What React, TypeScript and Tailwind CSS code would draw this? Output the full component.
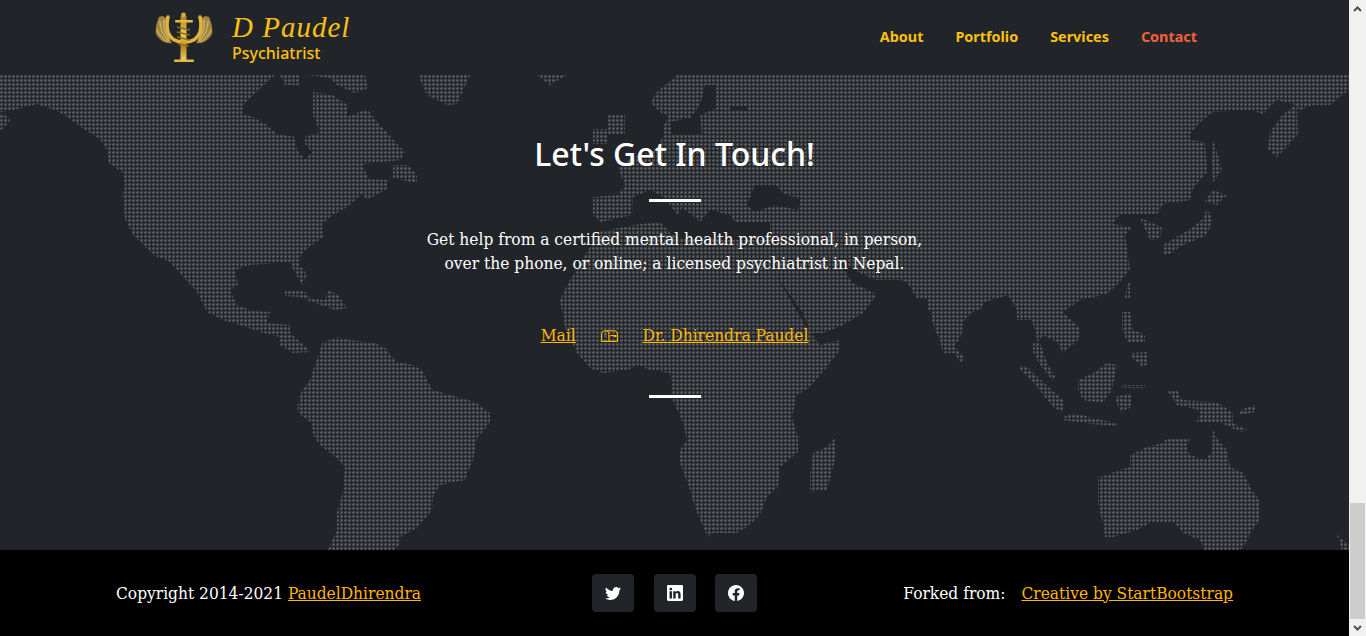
import { BsFacebook, BsLinkedin, BsTwitter } from "react-icons/bs";

const SERIF = "font-['DejaVu_Serif_Condensed','DejaVu_Serif',serif]";

const LAND = [
  // north america
  "0,75 275,75 260,89 243,105 242,114 253,117 267,125 277,134 295,137 297,150 305,159 312,152 305,144 305,137 320,132 313,115 313,92 333,95 347,105 347,117 367,109 380,125 397,144 405,152 400,160 363,164 368,179 387,180 387,189 367,200 362,194 347,207 330,217 322,224 323,237 303,252 298,262 307,275 302,285 293,269 290,262 250,265 235,270 238,285 230,290 237,305 253,311 270,312 267,323 290,325 290,333 307,348 310,352 293,353 280,345 280,337 263,333 240,325 223,320 207,312 197,292 185,279 170,262 153,255 133,235 125,219 122,194 125,185 122,172 107,162 108,152 100,139 85,130 63,114 52,109 37,104 25,107 13,110 2,112 0,112",
  "0,113 8,117 10,120 4,128 0,130",
  "280,75 300,75 300,85 285,85",
  "308,75 365,75 368,88 355,93 337,85 330,78",
  "393,165 408,165 417,175 417,183 393,178",
  "418,75 470,75 457,104 447,105 427,95",
  "537,75 567,75 550,85",
  "285,290 303,290 310,298 325,300 328,290 338,295 347,308 335,310 312,302 300,297 285,296",
  // south america
  "338,337 350,340 375,343 385,348 397,362 413,365 422,370 428,382 433,390 457,397 475,402 490,413 490,423 477,438 473,460 465,480 440,485 433,497 432,510 417,528 400,537 400,545 393,550 328,550 337,530 337,512 342,495 345,467 333,455 320,445 313,435 312,423 300,415 297,407 302,390 310,380 313,370 317,360 322,343",
  // eurasia
  "677,75 1349,75 1349,90 1340,97 1330,105 1313,105 1300,110 1293,104 1277,100 1263,114 1250,110 1213,112 1200,122 1190,134 1190,140 1205,142 1207,172 1193,189 1190,200 1163,204 1157,214 1133,215 1120,214 1113,224 1132,227 1125,235 1130,269 1120,282 1107,294 1080,300 1063,312 1080,328 1080,338 1070,347 1063,353 1057,342 1043,335 1038,343 1032,320 1017,320 1017,310 1008,295 985,302 980,310 973,312 963,322 962,333 955,347 965,358 960,363 955,353 943,353 940,340 935,330 932,320 932,312 927,310 927,299 917,299 907,282 900,280 875,280 877,295 863,313 843,325 823,333 810,333 803,313 790,295 777,277 772,262 770,240 770,222 735,222 730,215 710,210 700,222 692,215 682,208 677,215 665,198 650,190 633,197 632,215 600,222 593,215 593,197 618,195 625,185 618,168 628,160 640,155 655,150 663,137 663,127 668,117 660,112 650,102 657,92",
  "1145,220 1162,227 1160,239 1150,240 1140,218",
  "1033,343 1040,343 1048,365 1056,378 1052,380 1040,365 1033,352",
  "607,115 625,115 625,135 607,135",
  "593,129 607,129 607,144 593,144",
  // africa
  "560,300 567,285 587,252 600,232 633,225 660,222 672,235 690,240 705,238 725,240 770,240 777,277 805,325 820,345 840,340 840,350 827,367 810,387 797,395 792,417 798,437 798,452 780,467 778,487 767,497 760,515 747,527 737,533 713,533 708,537 703,527 695,507 690,490 680,463 680,450 687,440 683,423 673,400 670,373 650,370 637,365 628,370 603,373 590,368 577,353 565,327",
  "835,438 835,460 827,490 810,492 810,473 813,453 827,447",
  // east asia, islands
  "1207,209 1213,219 1207,235 1183,245 1168,255 1163,255 1163,245 1190,229 1203,219",
  "1212,190 1227,195 1217,205 1205,202",
  "1213,140 1218,155 1222,170 1213,182 1212,162",
  "1297,104 1298,135 1277,157 1268,149 1270,132 1283,114",
  "1122,312 1130,312 1133,330 1145,335 1145,343 1128,343 1122,330",
  "1132,353 1148,352 1148,365 1142,366 1132,358",
  "1127,282 1130,282 1130,299 1125,299",
  "1078,380 1093,373 1107,363 1117,365 1112,390 1103,403 1083,400 1078,390",
  "1020,365 1028,368 1055,393 1063,400 1063,412 1053,407 1037,387 1028,377 1020,370",
  "1063,417 1075,413 1092,418 1117,423 1117,426 1092,424 1063,420",
  "1115,397 1132,393 1132,407 1120,412",
  "1122,385 1145,385 1145,388 1122,388",
  "1167,390 1177,390 1182,400 1217,402 1233,413 1233,423 1247,430 1240,432 1220,422 1197,423 1200,410 1177,405",
  "1240,410 1255,405 1255,412 1240,415",
  // australia
  "1167,438 1190,438 1187,447 1190,455 1205,460 1212,452 1213,430 1218,440 1227,450 1230,467 1243,473 1253,492 1260,500 1260,520 1250,533 1247,542 1240,550 1205,550 1200,540 1183,533 1175,523 1150,523 1137,530 1113,537 1105,537 1102,520 1098,503 1098,478 1120,470 1130,467 1130,455 1147,447 1163,443",
  "1337,535 1349,545 1349,550 1342,550",
];

// inland water painted over the land
const WATER = [
  "705,85 715,85 716,108 700,115 702,135 672,135 670,122 690,118 700,105",
  "730,106 747,106 747,110 730,110",
  "755,185 775,185 785,195 800,198 798,210 775,205 755,212 747,205",
  "840,262 858,272 875,280 877,295 868,290 852,283",
];

function WorldMap() {
  return (
    <svg className="absolute inset-0 h-full w-full" viewBox="0 72 1349 478" preserveAspectRatio="none" aria-hidden="true">
      <defs>
        <pattern id="puntos" x="0" y="3" width="4" height="4" patternUnits="userSpaceOnUse">
          <rect width="3" height="3" fill="#323437" />
          <rect x="0.5" y="0.5" width="2" height="2" fill="#656668" />
        </pattern>
      </defs>
      {LAND.map((p) => (
        <polygon key={p} points={p} fill="url(#puntos)" />
      ))}
      {WATER.map((p) => (
        <polygon key={p} points={p} fill="#212529" />
      ))}
    </svg>
  );
}

function Logo() {
  return (
    <svg className="mt-[4px]" width="58" height="52" viewBox="0 0 58 52" aria-hidden="true">
      <defs>
        <linearGradient id="oro" x1="0" y1="0" x2="0" y2="1">
          <stop offset="0" stopColor="#a57c22" />
          <stop offset="0.4" stopColor="#f4cb4e" />
          <stop offset="0.7" stopColor="#b98a20" />
          <stop offset="1" stopColor="#f3d468" />
        </linearGradient>
      </defs>
      {/* alas */}
      <path d="M4 5 C1 12 0 18 1 22 C5 29 11 32 17 31 C13 26 11 14 11 6 C9 4 6 4 4 5Z" fill="#a4853f" />
      <path d="M54 5 C57 12 58 18 57 22 C53 29 47 32 41 31 C45 26 47 14 47 6 C49 4 52 4 54 5Z" fill="#a4853f" />
      <path
        d="M5 9 C5 16 8 24 14 29 M2 18 C4 23 8 27 13 30 M9 8 C8 15 10 22 15 28 M53 9 C53 16 50 24 44 29 M56 18 C54 23 50 27 45 30 M49 8 C50 15 48 22 43 28"
        stroke="#e0c67c"
        strokeWidth="1"
        fill="none"
      />
      {/* brazos */}
      <path d="M13 5 C11 14 11 29 27 30 M45 5 C47 14 47 29 31 30" stroke="#e3b435" strokeWidth="3.5" fill="none" strokeLinecap="round" />
      {/* vara */}
      <rect x="25.5" y="4" width="6" height="45" fill="url(#oro)" />
      <rect x="20" y="8" width="18" height="2.5" rx="1" fill="#e6bb42" />
      <rect x="19" y="47.5" width="20" height="2.5" rx="1" fill="#e6bb42" />
      <circle cx="28.5" cy="3" r="2.4" fill="#d6aa3c" />
      <path d="M22 15 L35 18 M22 20 L35 23 M22 25 L35 28 M23 32 L34 34" stroke="#8a6a1c" strokeWidth="1.4" />
    </svg>
  );
}

function Header() {
  return (
    <header className="flex h-[72px] items-center justify-between bg-[#212529] pl-[155px] pr-[152px] font-['Noto_Sans',sans-serif]">
      <div className="flex items-center gap-[19px]">
        <Logo />
        <div className="text-[#fdc010]">
          <div className="mt-[3px] font-['Liberation_Serif',serif] text-[29px] leading-[30px] tracking-[1px] italic">D Paudel</div>
          <div className="mt-px text-base leading-[20px] font-medium">Psychiatrist</div>
        </div>
      </div>
      <nav className="mt-px flex gap-8 text-[14.4px] font-bold text-[#fdc010]">
        <a>About</a>
        <a>Portfolio</a>
        <a>Services</a>
        <a className="text-[#f4623a]">Contact</a>
      </nav>
    </header>
  );
}

function Contacto() {
  return (
    <section className="relative flex h-[478px] flex-col items-center overflow-hidden bg-[#212529]">
      <WorldMap />
      <div className={`relative flex flex-col items-center text-white ${SERIF}`}>
        <h2 className="mt-[60px] font-['Noto_Sans',sans-serif] text-[32px] leading-[44px] font-medium">Let's Get In Touch!</h2>
        <hr className="mt-[23px] ml-px h-[3px] w-[52px] border-0 bg-white" />
        <p className="mt-[25px] text-center text-[17.2px] leading-[24px]">
          Get help from a certified mental health professional, in person,
          <br />
          over the phone, or online; a licensed psychiatrist in Nepal.
        </p>
        <div className="mt-[48px] flex items-center text-[17.2px] leading-[24px] text-[#ffb700] underline">
          <a>Mail</a>
          <svg className="mx-[25px]" width="17" height="17" viewBox="0 0 16 16" fill="currentColor" aria-hidden="true">
            <path d="M4 4a3 3 0 0 0-3 3v6h6V7a3 3 0 0 0-3-3zm0-1h8a4 4 0 0 1 4 4v6a1 1 0 0 1-1 1H1a1 1 0 0 1-1-1V7a4 4 0 0 1 4-4zm2.646 1A3.99 3.99 0 0 1 8 7v6h7V7a3 3 0 0 0-3-3H6.646z" />
            <path d="M11.793 8.5H9v-1h5a.5.5 0 0 1 .5.5v1a.5.5 0 0 1-.5.5h-1a.5.5 0 0 1-.354-.146l-.853-.854zM5 7c0 .552-.448 0-1 0s-1 .552-1 0a1 1 0 0 1 2 0z" />
          </svg>
          <a>Dr. Dhirendra Paudel</a>
        </div>
        <hr className="mt-[48px] ml-px h-[3px] w-[52px] border-0 bg-white" />
      </div>
    </section>
  );
}

function Footer() {
  const botones = [BsTwitter, BsLinkedin, BsFacebook];
  return (
    <footer className={`flex h-[86px] items-center bg-black px-[116px] text-[17.2px] text-white ${SERIF}`}>
      <div className="flex-1 pt-px">
        Copyright 2014-2021 <a className="text-[#ffb700] underline">PaudelDhirendra</a>
      </div>
      <div className="flex gap-[19.5px]">
        {botones.map((Icono, i) => (
          <a key={i} className="flex h-[38px] w-[42px] items-center justify-center rounded bg-[#212529]">
            <Icono size={16} />
          </a>
        ))}
      </div>
      <div className="flex flex-1 justify-end gap-4 pt-px">
        <span>Forked from:</span>
        <a className="text-[#ffb700] underline">Creative by StartBootstrap</a>
      </div>
    </footer>
  );
}

function BarraScroll() {
  return (
    <aside className="flex w-[17px] flex-col items-center bg-[#f1f1f1] text-[#505050]">
      <svg className="mt-[6px]" width="9" height="6" viewBox="0 0 9 6" fill="none" stroke="currentColor" strokeWidth="2" aria-hidden="true">
        <path d="M1 5 L4.5 1.5 L8 5" />
      </svg>
      <div className="mt-[491px] h-[116px] w-[15px] bg-[#cdcdcd]" />
      <svg className="mt-[6px]" width="9" height="6" viewBox="0 0 9 6" fill="none" stroke="currentColor" strokeWidth="2" aria-hidden="true">
        <path d="M1 1 L4.5 4.5 L8 1" />
      </svg>
    </aside>
  );
}

export default function App() {
  return (
    <div className="flex h-[636px] w-full overflow-hidden">
      <main className="flex-1">
        <Header />
        <Contacto />
        <Footer />
      </main>
      <BarraScroll />
    </div>
  );
}
